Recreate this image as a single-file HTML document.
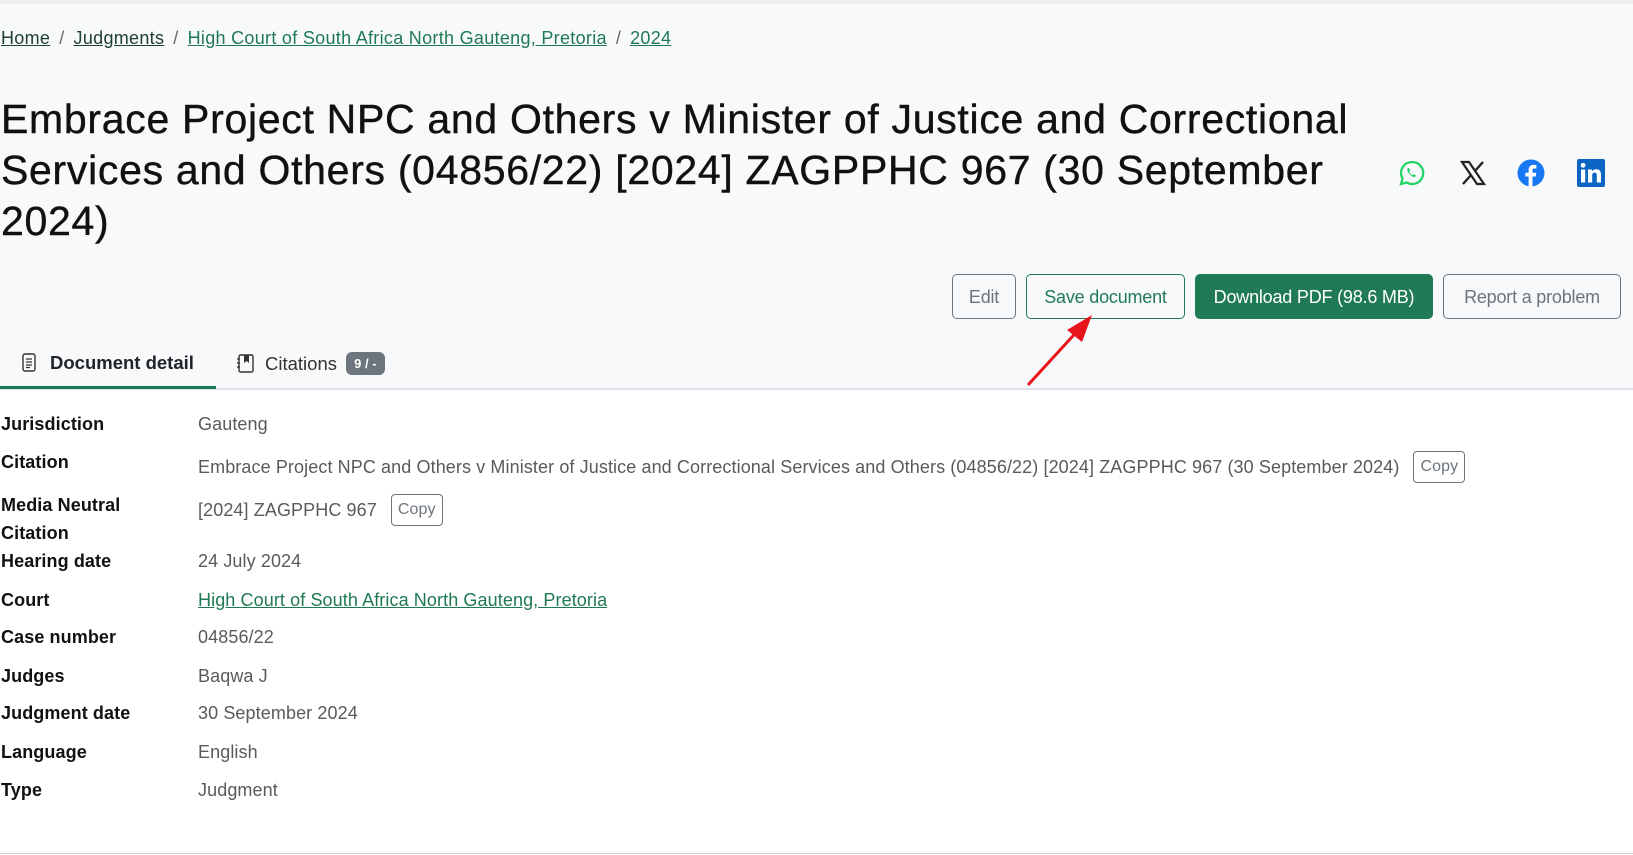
<!DOCTYPE html>
<html><head><meta charset="utf-8"><style>
*{margin:0;padding:0;box-sizing:border-box}
body{width:1633px;height:855px;overflow:hidden;background:#fff;font-family:"Liberation Sans",sans-serif;color:#212529;position:relative}
.top{position:absolute;left:0;top:0;width:1633px;height:390px;background:#f8f9fa;border-top:4px solid #eceef0}
.bc{position:absolute;left:1px;top:28px;font-size:18px;color:#555;white-space:nowrap;letter-spacing:0.3px}
.bc a{color:#1e4034;text-decoration:underline}
.bc a.g{color:#1f7a53}
.bc span{margin:0 9px;color:#666}
h1{position:absolute;left:1px;top:94px;font-size:41px;font-weight:normal;line-height:51px;white-space:nowrap;letter-spacing:0.7px;color:#111;-webkit-text-stroke:0.4px #111}
.ic{position:absolute;top:159px;width:28px;height:28px}
.btn{position:absolute;top:274px;height:45px;border:1px solid #6c757d;border-radius:5px;font-size:18px;color:#6c757d;display:flex;align-items:center;justify-content:center;white-space:nowrap;background:transparent;letter-spacing:-0.2px;padding-top:2px}
.tabs{position:absolute;left:0;top:388px;width:1633px;height:2px;background:#dee2e6}
.tabline{position:absolute;left:0;top:386px;width:216px;height:3px;background:#217a56}
.tab{position:absolute;top:352px;font-size:18.5px;white-space:nowrap}
.badge{display:inline-block;background:#6c757d;color:#fff;font-size:13px;font-weight:bold;border-radius:6px;padding:4px 8px;vertical-align:2px;margin-left:4px}
.row{position:absolute;left:1px;font-size:18px;white-space:nowrap}
.row b{position:absolute;left:0;top:0;color:#111;font-weight:bold;letter-spacing:0.1px}
.row .v{position:absolute;left:197px;top:0;color:#5a5a5a;letter-spacing:0.1px}
.v a{color:#1f7a53}
.copy{display:inline-block;border:1px solid #6c757d;border-radius:4px;font-size:16px;padding:6px 6px;color:#6c757d;margin-left:14px;vertical-align:middle;position:relative;top:-1px}
.bot{position:absolute;left:0;top:853px;width:1633px;height:1px;background:#ccc}
</style></head><body>
<div class="top"></div>
<div class="bc"><a href="#">Home</a><span>/</span><a href="#">Judgments</a><span>/</span><a class="g" href="#">High Court of South Africa North Gauteng, Pretoria</a><span>/</span><a class="g" href="#">2024</a></div>
<h1>Embrace Project NPC and Others v Minister of Justice and Correctional<br>Services and Others (04856/22) [2024] ZAGPPHC 967 (30 September<br>2024)</h1>

<svg class="ic" style="left:1398px" viewBox="0 0 28 28"><path d="M14 3a11 11 0 0 0-9.5 16.5L3 25l5.7-1.5A11 11 0 1 0 14 3z" fill="none" stroke="#25d366" stroke-width="2.3"/><path d="M10 9c-1 1-1 3 1 5.5s4.5 4 6 3.5l1-1.5-2.3-1.2-1 1c-1.5-.6-3-2-3.5-3.5l1-1L11 9z" fill="#25d366"/></svg>
<svg class="ic" style="left:1459px" viewBox="0 0 28 28"><path d="M3 3h7l15 22h-7z" fill="none" stroke="#222" stroke-width="2.2"/><path d="M24 3L15.5 12.5M4 25l8.5-9.5" stroke="#222" stroke-width="2.4"/></svg>
<svg class="ic" style="left:1517px" viewBox="0 0 28 28"><circle cx="14" cy="14" r="13.5" fill="#1877f2"/><path d="M15.5 28V17.5h3.3l.5-3.8h-3.8v-2.4c0-1.1.3-1.8 1.9-1.8h2V6.1c-.4 0-1.6-.2-2.9-.2-2.9 0-4.9 1.8-4.9 5v2.8H8.3v3.8h3.3V28z" fill="#fff"/></svg>
<svg class="ic" style="left:1577px" viewBox="0 0 28 28"><rect width="28" height="28" rx="2" fill="#0a66c2"/><rect x="4" y="10.5" width="4.2" height="13" fill="#fff"/><circle cx="6.1" cy="6.3" r="2.4" fill="#fff"/><path d="M11 10.5h4v1.9c.7-1.2 2.2-2.2 4.3-2.2 4 0 4.7 2.6 4.7 6v7.3h-4.2v-6.5c0-1.6-.1-3.4-2.2-3.4s-2.4 1.6-2.4 3.3v6.6H11z" fill="#fff"/></svg>

<div class="btn" style="left:952px;width:64px">Edit</div>
<div class="btn" style="left:1026px;width:159px;color:#217a56;border-color:#217a56">Save document</div>
<div class="btn" style="left:1195px;width:238px;background:#217a56;border-color:#217a56;color:#fff">Download PDF (98.6 MB)</div>
<div class="btn" style="left:1443px;width:178px">Report a problem</div>

<svg style="position:absolute;left:0;top:0" width="1633" height="855"><line x1="1028" y1="385" x2="1082" y2="326" stroke="#e8141b" stroke-width="3"/><polygon points="1092,315 1067,330 1082,342" fill="#e8141b"/></svg>

<div class="tabs"></div><div class="tabline"></div>
<div class="tab" style="left:22px;font-weight:bold"><svg width="14" height="19" viewBox="0 0 14 19" style="vertical-align:-3px;margin-right:14px"><rect x="1" y="1" width="12" height="17" rx="2" fill="none" stroke="#333" stroke-width="1.4"/><path d="M4 6h6M4 9h6M4 12h6M4 14.5h4" stroke="#333" stroke-width="1.2"/></svg>Document detail</div>
<div class="tab" style="left:236px;color:#333"><svg width="18" height="19" viewBox="0 0 18 19" style="vertical-align:-3px;margin-right:11px"><rect x="3" y="1" width="14" height="17" rx="1.5" fill="none" stroke="#333" stroke-width="1.4"/><path d="M8 1v8l2.5-2 2.5 2V1z" fill="#333"/><path d="M1 5h3M1 9h3M1 13h3" stroke="#333" stroke-width="1.2"/></svg>Citations <span class="badge">9 / -</span></div>

<div class="row" style="top:414px"><b>Jurisdiction</b><span class="v">Gauteng</span></div>
<div class="row" style="top:452px"><b>Citation</b><span class="v">Embrace Project NPC and Others v Minister of Justice and Correctional Services and Others (04856/22) [2024] ZAGPPHC 967 (30 September 2024)<span class="copy">Copy</span></span></div>
<div class="row" style="top:495px"><b>Media Neutral<br><span style="display:block;margin-top:7px">Citation</span></b><span class="v">[2024] ZAGPPHC 967<span class="copy">Copy</span></span></div>
<div class="row" style="top:551px"><b>Hearing date</b><span class="v">24 July 2024</span></div>
<div class="row" style="top:590px"><b>Court</b><span class="v"><a href="#">High Court of South Africa North Gauteng, Pretoria</a></span></div>
<div class="row" style="top:627px"><b>Case number</b><span class="v">04856/22</span></div>
<div class="row" style="top:666px"><b>Judges</b><span class="v">Baqwa J</span></div>
<div class="row" style="top:703px"><b>Judgment date</b><span class="v">30 September 2024</span></div>
<div class="row" style="top:742px"><b>Language</b><span class="v">English</span></div>
<div class="row" style="top:780px"><b>Type</b><span class="v">Judgment</span></div>
<div class="bot"></div>
</body></html>
